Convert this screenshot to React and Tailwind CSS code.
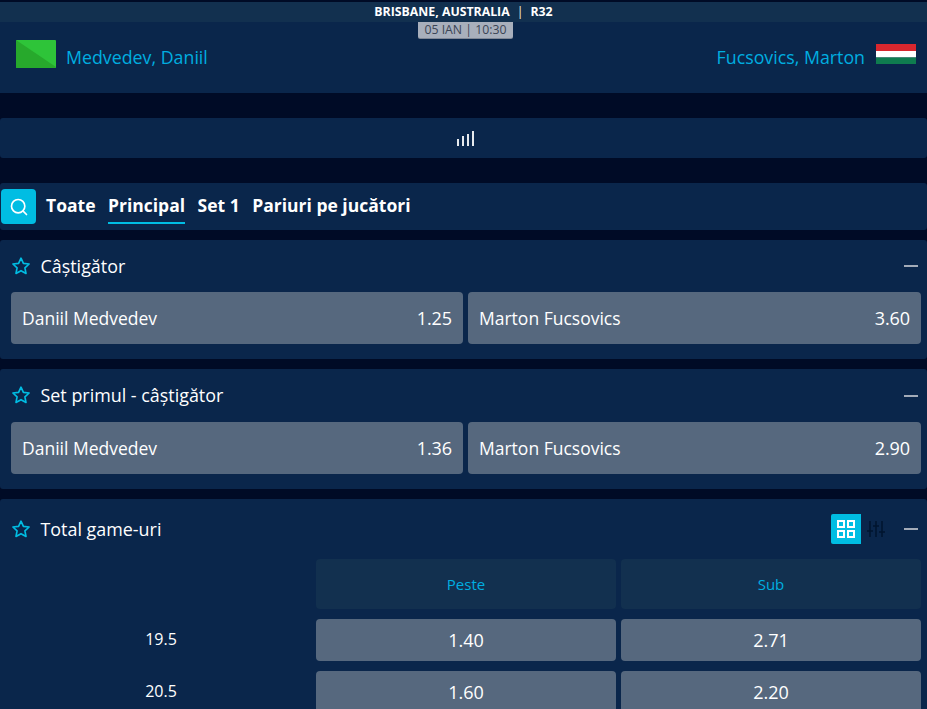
import React from "react";

const Star = () => (
  <svg width="20" height="20" viewBox="0 0 24 24" fill="none" stroke="#00bde3" strokeWidth="2" strokeLinejoin="round" className="shrink-0">
    <path d="M12 2.6l2.9 6.2 6.8.8-5 4.6 1.3 6.7L12 17.6l-6 3.3 1.3-6.7-5-4.6 6.8-.8z" />
  </svg>
);

const Minus = () => <div className="w-[14px] h-[2px] bg-[#a3abb8] shrink-0" />;

const Odd = ({ name, odd, className }) => (
  <div className={`h-[52px] rounded-[4px] bg-[#56687e] flex items-center justify-between px-[11px] text-white ${className}`}>
    <span className="text-[17.5px]">{name}</span>
    <span className="text-[18px] font-medium tracking-[-0.1px]">{odd}</span>
  </div>
);

const Market = ({ title, a, b, h, head }) => (
  <section className={`${h} bg-[#0a264b] rounded-[3px] pl-[11px] pr-[6px]`}>
    <div className={`${head} flex items-center justify-between pr-[3px]`}>
      <div className="flex items-center gap-[10px] text-white text-[17.9px] font-medium">
        <Star />
        <span className="-ml-[0.5px]">{title}</span>
      </div>
      <Minus />
    </div>
    <div className="flex gap-[5px]">
      <Odd name="Daniil Medvedev" odd={a} className="w-[452px]" />
      <Odd name="Marton Fucsovics" odd={b} className="flex-1" />
    </div>
  </section>
);

const Row = ({ label, a, b }) => (
  <div className="flex gap-[5px] h-[42px] mb-[10px] text-white text-[18px]">
    <div className="w-[300px] flex items-center justify-center text-[16px] font-medium -mt-[2px]">{label}</div>
    <div className="w-[300px] rounded-[4px] bg-[#56687e] flex items-center justify-center font-medium">{a}</div>
    <div className="w-[300px] rounded-[4px] bg-[#56687e] flex items-center justify-center font-medium">{b}</div>
  </div>
);

export default function App() {
  return (
    <div className="h-[709px] overflow-hidden bg-[#000b26] pt-[2px] text-white" style={{ fontFamily: '"Open Sans", sans-serif' }}>
      <header className="h-[91px] bg-[#0a264b] relative">
        <div className="h-[20px] bg-[#12304f] flex items-center justify-center gap-[7px] text-[12.3px] font-bold">
          <span>BRISBANE, AUSTRALIA</span>
          <span className="font-normal text-[#fff6d8]">|</span>
          <span>R32</span>
        </div>
        <div className="flex justify-center">
          <div className="h-[16px] w-[95px] text-center bg-[#a8afbc] rounded-b-[2px] text-[#3b4556] text-[12.3px] leading-[16px] ml-[4px] shadow-[0_1px_0_#7f8796]">05 IAN | 10:30</div>
        </div>
        <div className="flex items-start justify-between pl-[16px] pr-[11px] text-[#00aee0] text-[17.8px]">
          <div className="flex items-start gap-[10px]">
            <svg width="40" height="28" viewBox="0 0 40 28" className="rounded-[1px] mt-[2px]">
              <rect width="40" height="28" fill="#2ec439" />
              <path d="M0 0L40 27V28H0z" fill="#27a92c" />
            </svg>
            <span className="mt-[4px] leading-[30px]">Medvedev, Daniil</span>
          </div>
          <div className="flex items-start gap-[11px]">
            <span className="mt-[4px] leading-[30px]">Fucsovics, Marton</span>
            <svg width="40" height="20" viewBox="0 0 40 20" className="mt-[6px]">
              <rect width="40" height="7" fill="#d9272e" />
              <rect y="7" width="40" height="6.5" fill="#ffffff" />
              <rect y="13.5" width="40" height="6.5" fill="#0f7c4f" />
            </svg>
          </div>
        </div>
      </header>

      <div className="mt-[25px] h-[40px] bg-[#0a264b] rounded-[3px] flex items-center justify-center pl-[5px] pt-[1px]">
        <svg width="18" height="15" viewBox="0 0 18 15" stroke="#e6e9ed" strokeWidth="2">
          <path d="M1 15V8M6 15V5M11 15V3M16 15V0" />
        </svg>
      </div>

      <nav className="mt-[25px] h-[47px] bg-[#0a264b] rounded-[3px] flex items-center pl-[1px] font-bold text-[17.5px] pb-[3px]">
        <div className="w-[35px] h-[35px] rounded-[4px] bg-[#00bde3] flex items-center justify-center mr-[10px] mt-[3px]">
          <svg width="20" height="20" viewBox="0 0 24 24" fill="none" stroke="#fff" strokeWidth="2" strokeLinecap="round">
            <circle cx="11" cy="11" r="8" />
            <path d="M17 17l4 4" />
          </svg>
        </div>
        <span className="mr-[12.5px]">Toate</span>
        <span className="relative mr-[12.5px]">
          Principal
          <span className="absolute left-0 right-0 -bottom-[6px] h-[2px] bg-[#00bde3]" />
        </span>
        <span className="mr-[12.5px]">Set 1</span>
        <span>Pariuri pe jucători</span>
      </nav>

      <div className="mt-[10px]">
        <Market title="Câștigător" a="1.25" b="3.60" h="h-[119px]" head="h-[52px]" />
      </div>
      <div className="mt-[10px]">
        <Market title="Set primul - câștigător" a="1.36" b="2.90" h="h-[120px]" head="h-[53px]" />
      </div>

      <section className="mt-[10px] bg-[#0a264b] rounded-[3px] pl-[11px] pr-[6px] h-[300px]">
        <div className="h-[60px] flex items-center justify-between pr-[3px]">
          <div className="flex items-center gap-[10px] text-[17.9px] font-medium">
            <Star />
            <span className="-ml-[0.5px]">Total game-uri</span>
          </div>
          <div className="flex items-center">
            <div className="w-[30px] h-[30px] bg-[#00bde3] rounded-l-[2px] flex items-center justify-center">
              <svg width="18" height="18" viewBox="0 0 18 18" fill="none" stroke="#fff" strokeWidth="2">
                <rect x="1" y="1" width="6" height="6" />
                <rect x="11" y="1" width="6" height="6" />
                <rect x="1" y="11" width="6" height="6" />
                <rect x="11" y="11" width="6" height="6" />
              </svg>
            </div>
            <div className="w-[30px] h-[30px] flex items-center justify-center mr-[13px]">
              <svg width="18" height="18" viewBox="0 0 18 18" fill="none" stroke="#00152f" strokeWidth="1.5">
                <path d="M3 1v16M9 1v16M15 1v16M0 11h6M6 6h6M12 12h6" />
              </svg>
            </div>
            <Minus />
          </div>
        </div>
        <div className="flex gap-[5px] h-[50px] mb-[10px] text-[#00aee0] text-[15px]">
          <div className="w-[300px]" />
          <div className="w-[300px] rounded-[4px] bg-[#12304f] flex items-center justify-center">Peste</div>
          <div className="w-[300px] rounded-[4px] bg-[#12304f] flex items-center justify-center">Sub</div>
        </div>
        <Row label="19.5" a="1.40" b="2.71" />
        <Row label="20.5" a="1.60" b="2.20" />
      </section>
    </div>
  );
}
